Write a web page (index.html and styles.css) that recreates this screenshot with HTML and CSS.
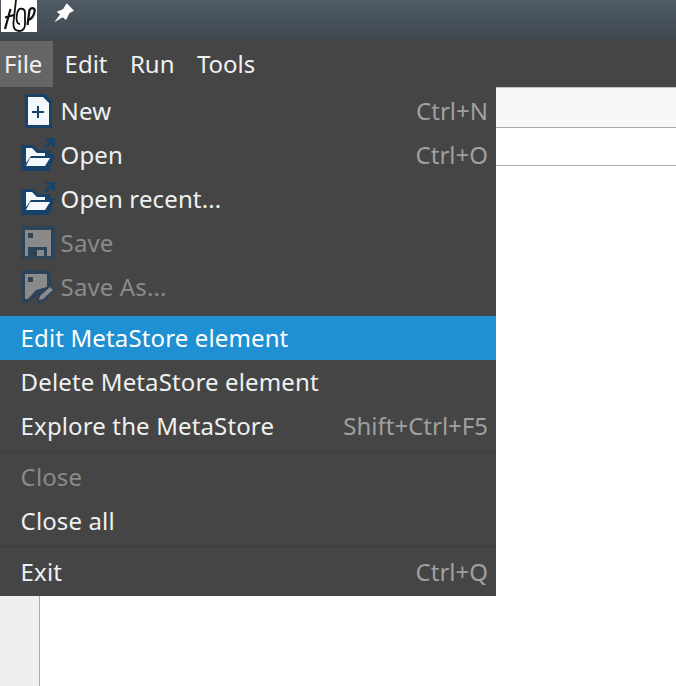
FILE: index.html
```html
<!DOCTYPE html>
<html lang="en">
<head>
<meta charset="utf-8"/>
<meta content="width=device-width, initial-scale=1.0" name="viewport"/>
<title>Hop</title>
<link rel="stylesheet" href="styles.css">
</head>
<body>
<header class="titlebar">
  <div class="logo">
    <svg width="36" height="32" viewBox="0 0 36 32">
      <path d="M9.500 9 L4 29 M4 17.500 L13 15" class="logo-line"/>
      <path d="M15 0 L12.500 22 C12 28 14 31 18 31 C22 31 24 28 24 24 L24 13 C24 8 18 7 16.500 12 C15 17 15 24 19 24" class="logo-thin"/>
      <path d="M26.500 25 L28.500 10 C31 7 34.500 8 33.500 12 C32.500 17 30 19 27.500 20" class="logo-line"/>
    </svg>
  </div>
  <svg class="pin" width="22" height="20" viewBox="0 0 22 20">
    <path d="M13.700 .3 L21 7.700 L16.500 10 L13 17 L9.700 14.200 L1.300 19.300 L7 11.500 L3.700 8.700 L10 6.300 Z" fill="#fff"/>
  </svg>
</header>
<nav class="menubar">
  <span class="menubar-item active">File</span>
  <span class="menubar-item">Edit</span>
  <span class="menubar-item">Run</span>
  <span class="menubar-item">Tools</span>
</nav>
<div class="workspace">
  <div class="sidebar"></div>
  <div class="content">
    <div class="tabs"></div>
    <div class="toolbar"></div>
  </div>
</div>

<div class="menu">
  <div class="item">
    <svg class="icon" viewBox="0 0 36 34"><path d="M4 0 H24 L31 7 V34 H4 Z" fill="#17426a"/><path d="M7 3 H22 L28 9 V31 H7 Z" fill="#f4f8fb"/><path d="M11 18 H23 M17 12 V24" stroke="#17426a" stroke-width="2" fill="none"/></svg>
    <span class="label">New</span><span class="key">Ctrl+N</span>
  </div>
  <div class="item">
    <svg class="icon" viewBox="0 0 36 34"><path d="M0 7 H12 L17 12 H29 V16 H34 L28 33 H0 Z" fill="#17426a"/><path d="M5 10 H11 L16 15 H24 V18 H10 L5 25 Z M9 20 H29 L24 28 H5 Z" fill="#f4f8fb"/><path d="M24 10 L32 2 M25 1.500 H32.500 V9" stroke="#17426a" stroke-width="3" fill="none"/></svg>
    <span class="label">Open</span><span class="key">Ctrl+O</span>
  </div>
  <div class="item">
    <svg class="icon" viewBox="0 0 36 34"><path d="M0 7 H12 L17 12 H29 V16 H34 L28 33 H0 Z" fill="#17426a"/><path d="M5 10 H11 L16 15 H24 V18 H10 L5 25 Z M9 20 H29 L24 28 H5 Z" fill="#f4f8fb"/><path d="M24 10 L32 2 M25 1.500 H32.500 V9" stroke="#17426a" stroke-width="3" fill="none"/></svg>
    <span class="label">Open recent...</span>
  </div>
  <div class="item disabled">
    <svg class="icon" viewBox="0 0 36 34"><path d="M0 0 H34 V33 H0 Z" fill="#2c4358"/><path d="M4 4 H30 V30 H4 Z" fill="#8a8a8a"/><path d="M7 7 H12 V12 H7 Z M7 21 H26 V30 H7 Z" fill="#2c4358"/><path d="M16 24 H23 V30 H16 Z" fill="#8a8a8a"/></svg>
    <span class="label">Save</span>
  </div>
  <div class="item disabled">
    <svg class="icon" viewBox="0 0 36 34"><path d="M0 0 H30 V16 L6 33 H0 Z" fill="#2c4358"/><path d="M4 4 H26 V17 L15 20 L7 29 H4 Z" fill="#8a8a8a"/><path d="M7 7 H12 V12 H7 Z" fill="#2c4358"/><path d="M15 33 L17 25 L29 14 L35 20 L22 33 Z" fill="#2c4358"/><path d="M18 30 L19 26 L29 17 L32 20 L22 29 Z" fill="#8a8a8a"/></svg>
    <span class="label">Save As...</span>
  </div>
  <div class="gap"></div>
  <div class="item selected"><span class="label">Edit MetaStore element</span></div>
  <div class="item"><span class="label">Delete MetaStore element</span></div>
  <div class="item"><span class="label">Explore the MetaStore</span><span class="key">Shift+Ctrl+F5</span></div>
  <div class="sep"></div>
  <div class="item disabled"><span class="label">Close</span></div>
  <div class="item"><span class="label">Close all</span></div>
  <div class="sep"></div>
  <div class="item"><span class="label">Exit</span><span class="key">Ctrl+Q</span></div>
</div>
</body>
</html>
```

FILE: styles.css
```css
html, body {
    margin: 0;
    height: 100%;
}

body {
    display: flex;
    flex-direction: column;
    position: relative;
    overflow: hidden;
    background-color: #ffffff;
    font-family: "Noto Sans", sans-serif;
    font-size: 24px;
    color: #eff0f1;
}

.titlebar {
    height: 41px;
    flex-shrink: 0;
    display: flex;
    align-items: flex-start;
    gap: 16px;
    background: linear-gradient(#4f5b66, #3f474e);
}

.logo {
    width: 36px;
    height: 32px;
    margin-left: 1px;
    background-color: #ffffff;
}

.logo svg {
    display: block;
}

.logo-line {
    fill: none;
    stroke: #111;
    stroke-width: 2.200;
}

.logo-thin {
    fill: none;
    stroke: #111;
    stroke-width: 1.800;
}

.pin {
    margin-top: 3px;
}

.menubar {
    height: 46px;
    flex-shrink: 0;
    display: flex;
    background-color: #454545;
}

.menubar-item {
    display: flex;
    align-items: center;
    padding: 0 11.200px;
    line-height: 46px;
}

.menubar-item:first-child {
    padding: 0 11px 0 4px;
}

.menubar-item.active {
    background-color: #656565;
}

.workspace {
    flex: 1;
    display: flex;
}

.sidebar {
    width: 39px;
    background-color: #efefef;
    border-right: 1px solid #ababab;
}

.content {
    flex: 1;
}

.tabs {
    height: 39px;
    background-color: #f8f8f8;
    border-top: 1px solid #c4c4c4;
    border-bottom: 1px solid #ababab;
}

.toolbar {
    height: 37px;
    background-color: #ffffff;
    border-bottom: 1px solid #ababab;
}

.menu {
    position: absolute;
    left: 0;
    top: 87px;
    width: 496px;
    height: 509px;
    box-sizing: border-box;
    padding-top: 2px;
    background-color: #454545;
}

.item {
    height: 44px;
    display: flex;
    align-items: center;
    position: relative;
    padding: 0 8px 0 20.600px;
    line-height: 44px;
}

.label {
    letter-spacing: 0.13px;
}

.item .icon {
    position: absolute;
    left: 21px;
    top: 5px;
    width: 36px;
    height: 34px;
}

.icon + .label {
    margin-left: 40px;
}

.key {
    margin-left: auto;
    color: #a0a0a0;
}

.disabled {
    color: #8a8a8a;
}

.selected {
    background-color: #1f90d2;
    color: #ffffff;
}

.gap {
    height: 7px;
}

.sep {
    height: 1px;
    margin: 3px 0;
    background-color: #3c3c3c;
}
```
